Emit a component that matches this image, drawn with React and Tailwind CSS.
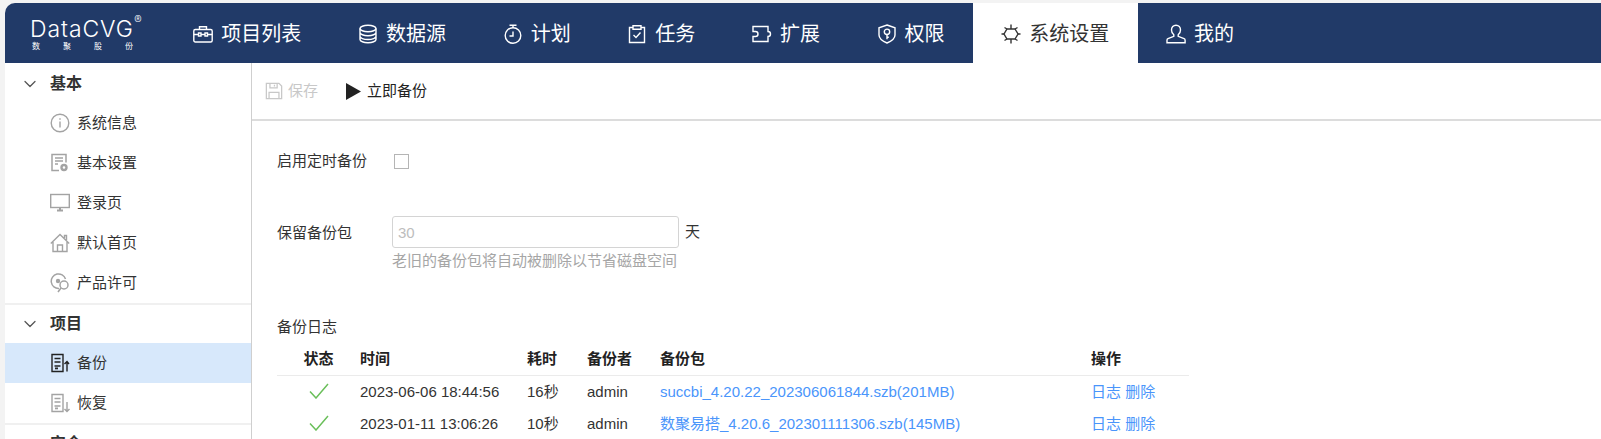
import React from "react";
import { ChevronDown } from "lucide-react";

const FONT = "font-['Liberation_Sans','Noto_Sans_CJK_SC',sans-serif]";

function IconBase({ className, children }) {
  return (
    <svg viewBox="0 0 20 20" fill="none" stroke="currentColor" strokeWidth="1.4" className={className}>
      {children}
    </svg>
  );
}

const ProjectIcon = (p) => (
  <IconBase {...p}>
    <rect x="0.800" y="5.500" width="18.400" height="12.500" rx="1.500" />
    <path d="M6.500 5.500V2.800h7v2.700M0.800 10.500h4.700M14.500 10.500h4.700M5.500 9h2.500v3H5.500zM12 9h2.500v3H12zM8 10.500h4" />
  </IconBase>
);
const DatabaseIcon = (p) => (
  <IconBase {...p}>
    <ellipse cx="10" cy="4.500" rx="8" ry="3.200" />
    <path d="M2 4.500v11c0 1.800 3.600 3.200 8 3.200s8-1.400 8-3.200v-11M2 8.500c0 1.800 3.600 3.200 8 3.200s8-1.400 8-3.200M2 12.300c0 1.800 3.600 3.200 8 3.200s8-1.400 8-3.200" />
  </IconBase>
);
const TimerIcon = (p) => (
  <IconBase {...p}>
    <circle cx="10" cy="11.500" r="7.800" />
    <path d="M6.500 1.300h7M10 1.300v2.400M10 7.500v4.500H6.500" />
  </IconBase>
);
const TaskIcon = (p) => (
  <IconBase {...p}>
    <path d="M6 3.500H2.500v15h15v-15H14M6 1.800h8v3.400H6z" />
    <path d="M6.500 11l2.500 2.500 4.500-5" />
  </IconBase>
);
const ExtendIcon = (p) => (
  <IconBase {...p}>
    <path d="M1 2.500h15v5a2.500 2.500 0 0 1 0 5v5H1v-5h2.500a2.500 2.500 0 0 0 0-5H1z" />
  </IconBase>
);
const ShieldIcon = (p) => (
  <IconBase {...p}>
    <path d="M10 1l8 2.800v7.200c0 3.600-3.700 6.200-8 8-4.300-1.800-8-4.400-8-8V3.800z" />
    <circle cx="10" cy="7.800" r="2.700" />
    <path d="M10 10.500v4.800M10 13.200h1.800" />
  </IconBase>
);
const SunIcon = (p) => (
  <IconBase {...p}>
    <path d="M6 5h8l3 5-3 5H6l-3-5z" />
    <path d="M10 0.500v4.500M10 15v4.500M0.500 10H3M17 10h2.500M3.500 3.500L6 5M16.500 3.500L14 5M3.500 16.500L6 15M16.500 16.500L14 15" />
  </IconBase>
);
const UserIcon = (p) => (
  <IconBase {...p}>
    <path d="M10 1.200c2.700 0 4.500 2 4.500 4.800 0 2-.9 3.700-2.300 4.800v1.500l5.900 2.400c.7.300 1 .8 1 1.500v2.500H1v-2.500c0-.7.300-1.200 1-1.500l5.800-2.400v-1.500C6.400 9.700 5.500 8 5.500 6c0-2.800 1.800-4.800 4.500-4.800z" />
  </IconBase>
);

const InfoIcon = (p) => (
  <IconBase {...p}>
    <circle cx="10" cy="10" r="8.800" />
    <path d="M10 8.500v6M10 5.200v1.600" />
  </IconBase>
);
const SettingDocIcon = (p) => (
  <svg viewBox="0 0 20 20" fill="none" stroke="currentColor" strokeWidth="1.500" className={p.className}>
    <path d="M9 17.500H2V1.500h14v8M5 5h8M5 8h8M5 11h3" />
    <circle cx="14" cy="14.500" r="2.500" strokeWidth="2.400" />
  </svg>
);
const MonitorIcon = (p) => (
  <IconBase {...p}>
    <rect x="0.700" y="1.500" width="18.600" height="13" />
    <path d="M7 17.500h6M10 14.500v3" strokeWidth="2" />
  </IconBase>
);
const HomeIcon = (p) => (
  <IconBase {...p}>
    <path d="M0.800 10.500L10 1.500l9.200 9M3 9v9.500h14V9M7.500 18.500V12h5v6.500M14.500 5V2.500h2V7" />
  </IconBase>
);
const LicenseIcon = (p) => (
  <svg viewBox="0 0 20 20" fill="none" stroke="currentColor" strokeWidth="1.500" className={p.className}>
    <path d="M9 15.500A7.300 7.300 0 1 1 15.500 6" />
    <circle cx="8" cy="8" r="2.200" fill="currentColor" stroke="none" />
    <circle cx="14" cy="12" r="4" />
    <path d="M11 15l-3 4" />
  </svg>
);
const BackupIcon = ({ className, up }) => (
  <svg viewBox="0 0 20 20" fill="none" stroke="currentColor" strokeWidth="1.400" className={className}>
    <path d="M13 18.500H2V1.500h11v17zM4.500 5.500h6M4.500 9h6M4.500 13h6" />
    <rect x="5" y="14.500" width="3" height="1.800" fill="currentColor" stroke="none" />
    {up ? <path d="M17 18.500V8.500M14.500 11l2.500-2.500 2 2.500" /> : <path d="M17 9v9.500M14.500 16l2.500 2.500 2.500-2.500" />}
  </svg>
);

const SaveIcon = (p) => (
  <IconBase {...p}>
    <path d="M1.500 1.500h14l3 3v14h-17z" />
    <path d="M5.500 1.500v5h8v-5M10.500 3v2M4.500 18.500v-7h11v7" />
  </IconBase>
);
const PlayIcon = (p) => (
  <svg viewBox="0 0 15 17" className={p.className}>
    <polygon points="0,0 15,8.500 0,17" fill="currentColor" />
  </svg>
);
const CheckMark = (p) => (
  <svg viewBox="0 0 20 16" fill="none" stroke="currentColor" strokeWidth="1.500" className={p.className}>
    <polyline points="1,8.500 7,15 19,1" />
  </svg>
);

const NAV = [
  { label: "项目列表", Icon: ProjectIcon },
  { label: "数据源", Icon: DatabaseIcon },
  { label: "计划", Icon: TimerIcon },
  { label: "任务", Icon: TaskIcon },
  { label: "扩展", Icon: ExtendIcon },
  { label: "权限", Icon: ShieldIcon },
  { label: "系统设置", Icon: SunIcon, active: true },
  { label: "我的", Icon: UserIcon },
];

const MENU = [
  {
    title: "基本",
    items: [
      { label: "系统信息", Icon: InfoIcon },
      { label: "基本设置", Icon: SettingDocIcon },
      { label: "登录页", Icon: MonitorIcon },
      { label: "默认首页", Icon: HomeIcon },
      { label: "产品许可", Icon: LicenseIcon },
    ],
  },
  {
    title: "项目",
    items: [
      { label: "备份", Icon: (p) => <BackupIcon {...p} up />, active: true },
      { label: "恢复", Icon: BackupIcon },
    ],
  },
  { title: "安全", items: [] },
];

const LOGS = [
  { time: "2023-06-06 18:44:56", cost: "16秒", user: "admin", file: "succbi_4.20.22_202306061844.szb(201MB)" },
  { time: "2023-01-11 13:06:26", cost: "10秒", user: "admin", file: "数聚易搭_4.20.6_202301111306.szb(145MB)" },
];

function Logo() {
  return (
    <div className="w-[160px] shrink-0 pl-[25px] pt-[13px] self-start text-white">
      <div className="relative w-fit font-['Inter',sans-serif] text-[23px] leading-[26px] font-light tracking-[0.9px]">
        DataCVG
        <span className="absolute -right-[8px] -top-[2px] text-[11px] leading-[12px] tracking-normal">®</span>
      </div>
      <div className="flex w-[103px] justify-between pl-[2px] text-[8px] leading-[9px]">
        <span>数</span>
        <span>聚</span>
        <span>股</span>
        <span>份</span>
      </div>
    </div>
  );
}

function Sidebar() {
  return (
    <aside className="w-[247px] shrink-0 border-r border-[#cfcfcf] bg-white">
      {MENU.map((group) => (
        <div key={group.title} className="border-b-2 border-[#f0f0f0] -mb-[2px]">
          <div className="flex h-[40px] items-center pt-px font-bold text-[16px] text-[#333]">
            <ChevronDown className="ml-[15px] mr-[10px] h-[20px] w-[20px] text-[#555]" strokeWidth={1.5} />
            {group.title}
          </div>
          {group.items.map(({ label, Icon, active }) => (
            <div
              key={label}
              className={`relative flex h-[40px] items-center gap-[7px] pl-[45px] text-[15px] text-[#333] ${active ? "bg-[#d7e8fb]" : ""}`}
            >
              <Icon className={`h-[20px] w-[20px] ${active ? "text-[#222]" : "text-[#a3a3a3]"}`} />
              {label}
            </div>
          ))}
        </div>
      ))}
    </aside>
  );
}

export default function App() {
  return (
    <div className={`h-[439px] overflow-hidden bg-[#f3f3f3] pl-[5px] pt-[3px] ${FONT}`}>
      <nav className="flex h-[60px] items-center rounded-tl-[10px] bg-[#213a68] text-[20px] text-white">
        <Logo />
        {NAV.map(({ label, Icon, active }) => (
          <div
            key={label}
            className={`flex h-full items-center gap-2 px-[28.33px] pt-px ${active ? "bg-white text-[#333]" : ""}`}
          >
            <Icon className="h-[20px] w-[20px]" />
            {label}
          </div>
        ))}
      </nav>
      <div className="flex h-[376px] bg-white">
        <Sidebar />
        <main className="min-w-0 flex-1">
          <div className="flex h-[58px] items-center gap-[28px] border-b-2 border-[#dcdcdc] pl-[13px] text-[15px]">
            <div className="flex items-center gap-[5px] text-[#c8c8c8]">
              <SaveIcon className="h-[18px] w-[18px]" />
              保存
            </div>
            <div className="flex items-center gap-[6px] text-[#222]">
              <PlayIcon className="h-[17px] w-[15px]" />
              立即备份
            </div>
          </div>
          <div className="pl-[25px] pt-[30px] text-[15px] text-[#333]">
            <div className="flex h-[20px] items-center">
              <span className="w-[117px]">启用定时备份</span>
              <span className="h-[15px] w-[15px] border border-[#b5b5b5]" />
            </div>
            <div className="mt-[45px] flex">
              <span className="w-[115px] pt-px leading-[32px]">保留备份包</span>
              <div>
                <div className="flex items-center">
                  <input
                    readOnly
                    disabled
                    value="30"
                    className="h-[32px] w-[287px] rounded-[3px] border border-[#d4d4d4] bg-white px-[5px] text-[15px] text-[#bdbdbd]"
                  />
                  <span className="ml-[6px]">天</span>
                </div>
                <div className="mt-[3px] text-[15px] leading-[20px] text-[#a6a6a6]">老旧的备份包将自动被删除以节省磁盘空间</div>
              </div>
            </div>
            <div className="mt-[46px] leading-[20px]">备份日志</div>
            <table className="mt-[6px] w-[912px] table-fixed border-collapse text-left">
              <thead>
                <tr className="h-[32px] border-b border-[#ebebeb] font-bold text-[#222]">
                  <th className="w-[83px] text-[15px] text-center font-bold">状态</th>
                  <th className="w-[167px] font-bold">时间</th>
                  <th className="w-[60px] font-bold">耗时</th>
                  <th className="w-[73px] font-bold">备份者</th>
                  <th className="w-[431px] font-bold">备份包</th>
                  <th className="font-bold">操作</th>
                </tr>
              </thead>
              <tbody>
                {LOGS.map((log) => (
                  <tr key={log.time} className="h-[32px]">
                    <td>
                      <CheckMark className="mx-auto h-[16px] w-[20px] text-[#6abf5a]" />
                    </td>
                    <td className="pt-[2px]">{log.time}</td>
                    <td className="pt-[2px]">{log.cost}</td>
                    <td className="pt-[2px]">{log.user}</td>
                    <td className="pt-[2px] text-[#4a95fb]">{log.file}</td>
                    <td className="pt-[2px] text-[#4a95fb]">日志 删除</td>
                  </tr>
                ))}
              </tbody>
            </table>
          </div>
        </main>
      </div>
    </div>
  );
}
